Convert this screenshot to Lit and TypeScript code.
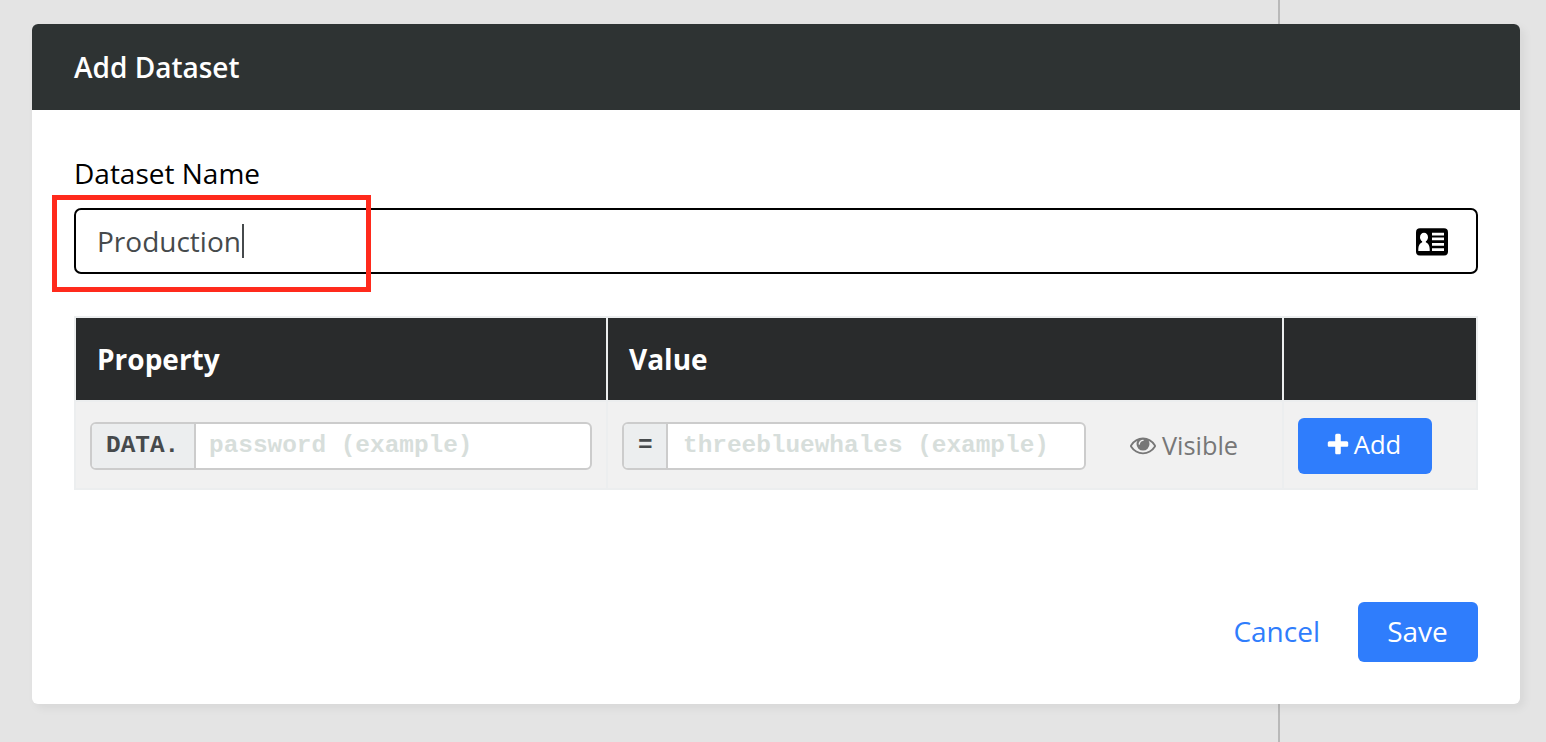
import { LitElement, html, css, svg } from "lit";
import { customElement } from "lit/decorators.js";

const EYE =
  "M1664 960q-152-236-381-353 61 104 61 225 0 185-131.5 316.5t-316.5 131.5-316.5-131.5-131.5-316.5q0-121 61-225-229 117-381 353 133 205 333.5 326.5t434.5 121.5 434.5-121.5 333.5-326.5zm-720-384q0-20-14-34t-34-14q-125 0-214.5 89.5t-89.5 214.5q0 20 14 34t34 14 34-14 14-34q0-86 61-147t147-61q20 0 34-14t14-34zm848 384q0 34-20 69-140 230-376.5 368.5t-499.5 138.5-499.5-139-376.5-368q-20-35-20-69t20-69q140-229 376.5-368t499.5-139 499.5 139 376.5 368q20 35 20 69z";
const PLUS =
  "M1600 736v192q0 40-28 68t-68 28h-416v416q0 40-28 68t-68 28h-192q-40 0-68-28t-28-68v-416h-416q-40 0-68-28t-28-68v-192q0-40 28-68t68-28h416v-416q0-40 28-68t68-28h192q40 0 68 28t28 68v416h416q40 0 68 28t28 68z";

@customElement("app-root")
export class AppRoot extends LitElement {
  static styles = css`
    :host {
      display: block;
      font-family: "Open Sans", "Noto Sans", sans-serif;
      font-size: 28px;
      color: #000;
    }
    * {
      box-sizing: border-box;
    }
    .page {
      position: relative;
      height: 742px;
      padding: 24px 26px 38px 32px;
      background: #e4e4e4;
      overflow: hidden;
    }
    .divider {
      position: absolute;
      left: 1278px;
      top: 0;
      bottom: 0;
      width: 2px;
      background: #b9b9b9;
    }
    .modal {
      position: relative;
      height: 680px;
      border-radius: 6px;
      background: #fff;
      box-shadow: 4px 4px 10px rgba(0, 0, 0, 0.06);
      display: flex;
      flex-direction: column;
    }
    .head {
      height: 86px;
      padding: 0 42px;
      display: flex;
      align-items: center;
      background: #2e3333;
      border-radius: 6px 6px 0 0;
      color: #fff;
      font-weight: 600;
      line-height: 38px;
    }
    .body {
      padding: 43px 42px 42px;
      flex: 1;
      display: flex;
      flex-direction: column;
    }
    .label {
      height: 40px;
      line-height: 40px;
      margin-bottom: 15px;
    }
    .field {
      position: relative;
      height: 66px;
      border: 2px solid #000;
      border-radius: 7px;
      padding: 0 28px 0 21px;
      display: flex;
      align-items: center;
      justify-content: space-between;
      color: #464a4c;
    }
    .value {
      display: flex;
      align-items: center;
      gap: 1px;
    }
    .caret {
      width: 2px;
      height: 34px;
      background: #464a4c;
    }
    .card {
      display: block;
      width: 32px;
      height: 28px;
      margin-top: 2px;
    }
    .mark {
      position: absolute;
      left: -24px;
      top: -15px;
      width: 319px;
      height: 97px;
      border: 5px solid #ff2a1c;
    }
    .table {
      margin-top: 42px;
      display: grid;
      grid-template-columns: 530px 674px 192px;
      grid-template-rows: 82px 86px;
      gap: 2px;
      padding: 2px;
      background: #eceeef;
    }
    .th {
      background: #292b2c;
      color: #fff;
      font-weight: 700;
      padding: 0 21px;
      line-height: 82px;
    }
    .td {
      background: #f1f1f1;
      padding: 2px 0 0 14px;
      display: flex;
      align-items: center;
    }
    .group {
      height: 48px;
      border: 2px solid #ccc;
      border-radius: 6px;
      display: flex;
      background: #fff;
      overflow: hidden;
      font: 700 24.4px/43px "Liberation Mono", monospace;
      color: #d7dedb;
      white-space: pre;
    }
    .prop {
      width: 502px;
    }
    .val {
      width: 464px;
    }
    .addon {
      background: #eceeef;
      border-right: 2px solid #ccc;
      color: #464a4c;
      padding: 0 14px;
    }
    .prop .addon {
      width: 104px;
    }
    .val .addon {
      width: 44px;
    }
    .hint {
      padding-left: 13px;
    }
    .val .hint {
      padding-left: 15px;
    }
    .visible {
      margin-left: 44px;
      display: flex;
      align-items: center;
      gap: 6px;
      font-size: 25.3px;
      line-height: 36px;
      padding-bottom: 2px;
      color: #777;
    }
    .icon {
      width: 26px;
      height: 26px;
      fill: currentColor;
    }
    .btn {
      display: flex;
      align-items: center;
      justify-content: center;
      background: #2f7dfc;
      color: #fff;
      border-radius: 6px;
      padding-bottom: 2px;
    }
    .add {
      width: 134px;
      height: 56px;
      padding: 0 4px 3px 0;
      font-size: 25.6px;
      gap: 3px;
    }
    .foot {
      margin-top: auto;
      display: flex;
      justify-content: flex-end;
      align-items: center;
      gap: 38px;
    }
    .cancel {
      color: #2f7dfc;
      padding-bottom: 2px;
    }
    .save {
      width: 120px;
      height: 60px;
      padding-right: 1px;
    }
  `;

  private icon(path: string) {
    return html`<svg class="icon" viewBox="0 0 1792 1792">${svg`<path d=${path} />`}</svg>`;
  }

  render() {
    return html`
      <div class="page">
        <div class="divider"></div>
        <div class="modal">
          <div class="head"><span class="title">Add Dataset</span></div>
          <div class="body">
            <div class="label"><span>Dataset Name</span></div>
            <div class="field">
              <div class="value"><span>Production</span><span class="caret"></span></div>
              <svg class="card" viewBox="0 0 32 28">
                <rect y="0.300" width="32" height="27.200" rx="4" />
                <g fill="#fff">
                  <ellipse cx="8" cy="9.300" rx="4" ry="4.500" />
                  <path d="M2.300 23v-2c0-3.500 1.500-5.500 3.900-6.800v-2h3.600v2c2.400 1.300 3.900 3.300 3.900 6.800v2z" />
                  <path d="M16 4.700h12v2.700H16zM16 9.600h12v2.700H16zM16 15h12v2.700H16zM16 20.300h12v2.700H16z" />
                </g>
              </svg>
              <div class="mark"></div>
            </div>
            <div class="table">
              <div class="th"><span>Property</span></div>
              <div class="th"><span>Value</span></div>
              <div class="th"></div>
              <div class="td">
                <div class="group prop">
                  <span class="addon">DATA.</span><span class="hint">password (example)</span>
                </div>
              </div>
              <div class="td">
                <div class="group val">
                  <span class="addon">=</span><span class="hint">threebluewhales (example)</span>
                </div>
                <div class="visible">${this.icon(EYE)}<span>Visible</span></div>
              </div>
              <div class="td">
                <div class="btn add">${this.icon(PLUS)}<span>Add</span></div>
              </div>
            </div>
            <div class="foot">
              <span class="cancel">Cancel</span>
              <div class="btn save"><span>Save</span></div>
            </div>
          </div>
        </div>
      </div>
    `;
  }
}
